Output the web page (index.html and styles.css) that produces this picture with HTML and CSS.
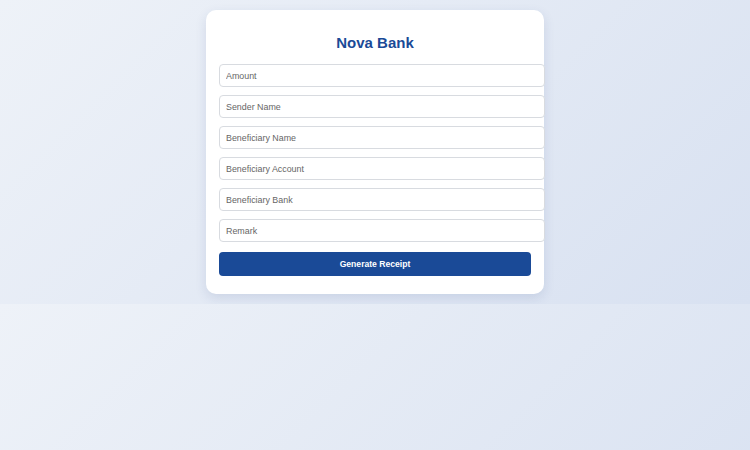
FILE: index.html
```html
<!DOCTYPE html>
<html lang="en">
<head>
<meta charset="utf-8">
<title>Nova Bank</title>
<link rel="stylesheet" href="styles.css">
</head>
<body>
<div class="card">
  <h2 class="title">Nova Bank</h2>
  <form class="form">
    <input class="field" type="text" placeholder="Amount">
    <input class="field" type="text" placeholder="Sender Name">
    <input class="field" type="text" placeholder="Beneficiary Name">
    <input class="field" type="text" placeholder="Beneficiary Account">
    <input class="field" type="text" placeholder="Beneficiary Bank">
    <input class="field" type="text" placeholder="Remark">
    <button class="submit" type="button">Generate Receipt</button>
  </form>
</div>
</body>
</html>
```

FILE: styles.css
```css
body {
  margin: 0;
  padding: 10px;
  font-family: "Liberation Sans", Arial, sans-serif;
  background: linear-gradient(135deg, #eef2f8, #d8e1f1);
}

.card {
  width: 312px;
  margin: 0 auto;
  padding: 12px 13px 13px;
  background: #ffffff;
  border-radius: 10px;
  box-shadow: 0 4px 12px rgba(30, 60, 120, 0.12);
}

.title {
  margin: 12px 0 13.3px;
  text-align: center;
  color: #1a4a97;
  font-size: 15px;
  line-height: 17px;
  font-weight: bold;
}

.form {
  margin: 0;
}

.field {
  display: block;
  width: 326px;
  height: 23px;
  margin: 0 0 8px;
  padding: 0 6px;
  border: 1px solid #d8dbe0;
  border-radius: 4px;
  font-family: "Liberation Sans", Arial, sans-serif;
  font-size: 8.9px;
  color: #333;
  background: #fff;
  box-sizing: border-box;
}

.field::placeholder {
  color: #666666;
}

.submit {
  display: block;
  width: 100%;
  height: 24px;
  margin: 10px 0 5px;
  padding: 0;
  border: none;
  border-radius: 4px;
  background: #1a4a97;
  color: #ffffff;
  font-family: "Liberation Sans", Arial, sans-serif;
  font-size: 8.6px;
  font-weight: bold;
}
```
